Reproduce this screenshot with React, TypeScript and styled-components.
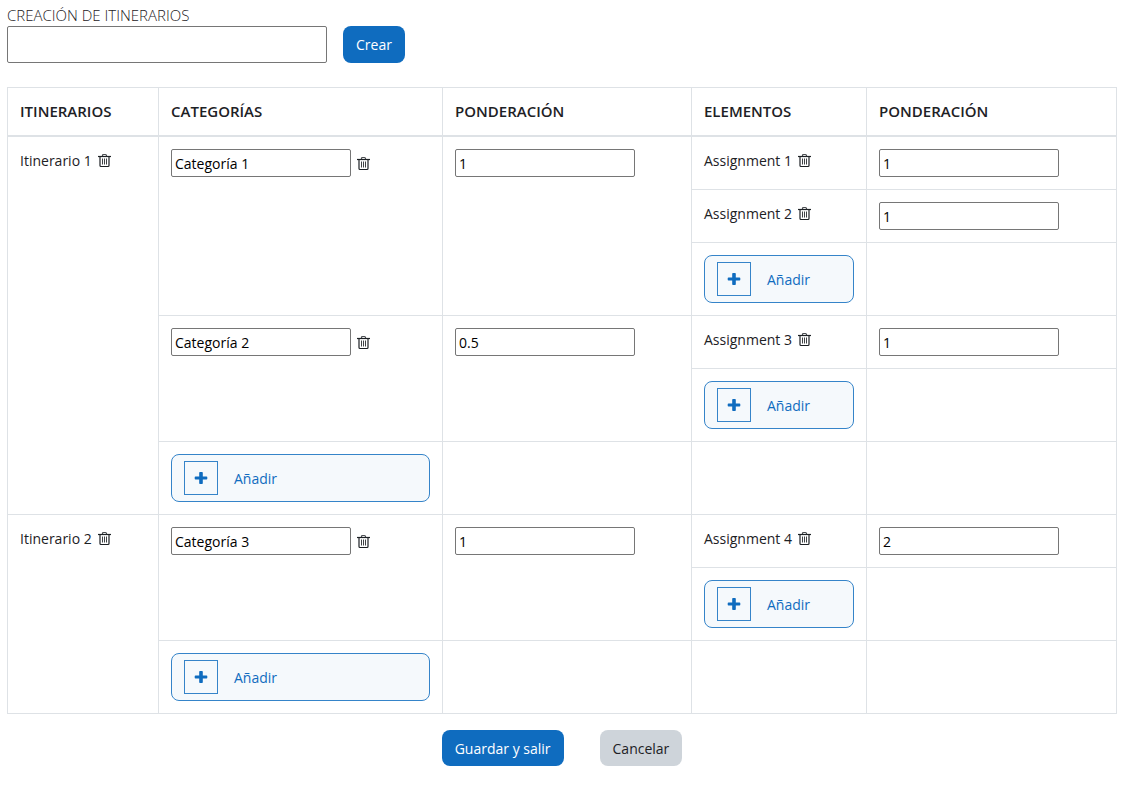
import React from "react";
import styled, { createGlobalStyle } from "styled-components";

const GlobalStyle = createGlobalStyle`
  *, *::before, *::after { box-sizing: border-box; }
  body {
    margin: 0;
    background: #fff;
    color: #1d2125;
    font-family: "Segoe UI", "Open Sans", "Noto Sans", sans-serif;
    font-size: 14px;
    line-height: 23px;
  }
  button, input { font: inherit; }
`;

const Page = styled.main`
  padding: 4px 13px 16px 7px;
`;

const CreateForm = styled.form`
  display: grid;
  grid-template-columns: 320px auto;
  justify-content: start;
  column-gap: 16px;
  margin-bottom: 24px;
`;

const FormLabel = styled.label`
  grid-column: 1 / -1;
  height: 22px;
  font-size: 15px;
  font-weight: 300;
`;

const TextInput = styled.input<{ $large?: boolean }>`
  width: ${(p) => (p.$large ? "100%" : "180px")};
  max-width: 100%;
  height: ${(p) => (p.$large ? "37px" : "28px")};
  padding: 1px 3px;
  border: 1px solid #767676;
  border-radius: 2px;
  background: #fff;
  color: #000;
`;

const Button = styled.button<{ $variant?: "primary" | "secondary" }>`
  min-height: 36px;
  padding: 0 13px;
  border: 0;
  border-radius: 8px;
  cursor: pointer;
  background: ${(p) => (p.$variant === "secondary" ? "#ced4da" : "#0f6cbf")};
  color: ${(p) => (p.$variant === "secondary" ? "#1d2125" : "#fff")};
`;

const Table = styled.table`
  width: 100%;
  table-layout: fixed;
  border-collapse: collapse;
`;

const Column = styled.col<{ $width: number }>`
  width: ${(p) => p.$width}px;
`;

const HeadCell = styled.th`
  padding: 12px;
  border: 1px solid #dee2e6;
  border-bottom-width: 2px;
  text-align: left;
  font-size: 15px;
  font-weight: 600;
`;

const Cell = styled.td`
  padding: 12px;
  border: 1px solid #dee2e6;
  vertical-align: top;
`;

const Named = styled.div`
  display: flex;
  align-items: center;
  gap: 6px;
`;

const IconButton = styled.button`
  display: flex;
  padding: 0;
  border: 0;
  background: none;
  color: #1d2125;
  cursor: pointer;
`;

const AddButton = styled.button`
  display: flex;
  align-items: center;
  gap: 16px;
  width: 100%;
  height: 48px;
  padding: 0 12px;
  border: 1px solid #3584c9;
  border-radius: 8px;
  background: #f5f9fc;
  color: #0f6cbf;
  cursor: pointer;
`;

const PlusBox = styled.span`
  display: flex;
  align-items: center;
  justify-content: center;
  width: 34px;
  height: 34px;
  border: 1px solid #3584c9;
`;

const Actions = styled.div`
  display: flex;
  justify-content: center;
  gap: 36px;
  margin-top: 16px;
`;

const TrashIcon = () => (
  <svg width="13" height="15" viewBox="0 0 13 15" fill="none" stroke="currentColor" aria-hidden="true">
    <path d="M0 3.500h13" strokeWidth="1.200" />
    <path d="M4.500 3.500v-1q0-1 1-1h2q1 0 1 1v1" strokeWidth="1.200" opacity="0.800" />
    <path d="M2 3.500v9q0 1 1 1h7q1 0 1-1v-9" strokeWidth="1.200" />
    <path d="M4.500 5.500v6M6.500 5.500v6M8.500 5.500v6" opacity="0.850" />
  </svg>
);

const PlusIcon = () => (
  <svg width="14" height="14" viewBox="0 0 14 14" fill="currentColor" aria-hidden="true">
    <path d="M6 1h2q.8 0 .8.8v3.700h3.700q.8 0 .8.8v1.400q0 .8-.8.8H8.800v3.700q0 .8-.8.8H6q-.8 0-.8-.8V8.500H1.500q-.8 0-.8-.8V6.300q0-.8.8-.8h3.700V1.800q0-.8.8-.8z" />
  </svg>
);

const Remove = ({ name }: { name: string }) => (
  <IconButton type="button" aria-label={`Eliminar ${name}`}>
    <TrashIcon />
  </IconButton>
);

const Add = () => (
  <AddButton type="button">
    <PlusBox>
      <PlusIcon />
    </PlusBox>
    Añadir
  </AddButton>
);

interface Element {
  name: string;
  weight: string;
}
interface Category extends Element {
  elements: Element[];
}
interface Itinerary {
  name: string;
  categories: Category[];
}

const itineraries: Itinerary[] = [
  {
    name: "Itinerario 1",
    categories: [
      {
        name: "Categoría 1",
        weight: "1",
        elements: [
          { name: "Assignment 1", weight: "1" },
          { name: "Assignment 2", weight: "1" },
        ],
      },
      { name: "Categoría 2", weight: "0.5", elements: [{ name: "Assignment 3", weight: "1" }] },
    ],
  },
  {
    name: "Itinerario 2",
    categories: [{ name: "Categoría 3", weight: "1", elements: [{ name: "Assignment 4", weight: "2" }] }],
  },
];

const columns = [
  { title: "ITINERARIOS", width: 151 },
  { title: "CATEGORÍAS", width: 284 },
  { title: "PONDERACIÓN", width: 249 },
  { title: "ELEMENTOS", width: 175 },
  { title: "PONDERACIÓN", width: 250 },
];

const ItineraryRows = ({ itinerary }: { itinerary: Itinerary }) => {
  const span = itinerary.categories.reduce((n, c) => n + c.elements.length + 1, 1);
  return (
    <tbody>
      {itinerary.categories.map((category, ci) => {
        const rows = category.elements.length + 1;
        return (
          <React.Fragment key={category.name}>
            {category.elements.map((element, ei) => (
              <tr key={element.name}>
                {ci === 0 && ei === 0 && (
                  <Cell rowSpan={span}>
                    <Named>
                      {itinerary.name}
                      <Remove name={itinerary.name} />
                    </Named>
                  </Cell>
                )}
                {ei === 0 && (
                  <>
                    <Cell rowSpan={rows}>
                      <Named>
                        <TextInput aria-label="Categoría" defaultValue={category.name} />
                        <Remove name={category.name} />
                      </Named>
                    </Cell>
                    <Cell rowSpan={rows}>
                      <TextInput aria-label={`Ponderación de ${category.name}`} defaultValue={category.weight} />
                    </Cell>
                  </>
                )}
                <Cell>
                  <Named>
                    {element.name}
                    <Remove name={element.name} />
                  </Named>
                </Cell>
                <Cell>
                  <TextInput aria-label={`Ponderación de ${element.name}`} defaultValue={element.weight} />
                </Cell>
              </tr>
            ))}
            <tr>
              <Cell>
                <Add />
              </Cell>
              <Cell />
            </tr>
          </React.Fragment>
        );
      })}
      <tr>
        <Cell>
          <Add />
        </Cell>
        <Cell />
        <Cell />
        <Cell />
      </tr>
    </tbody>
  );
};

export default function App() {
  return (
    <>
      <GlobalStyle />
      <Page>
        <CreateForm onSubmit={(e) => e.preventDefault()}>
          <FormLabel htmlFor="nombre">CREACIÓN DE ITINERARIOS</FormLabel>
          <TextInput id="nombre" $large />
          <Button type="submit">Crear</Button>
        </CreateForm>
        <Table>
          <colgroup>
            {columns.map((c, i) => (
              <Column key={i} $width={c.width} />
            ))}
          </colgroup>
          <thead>
            <tr>
              {columns.map((c, i) => (
                <HeadCell key={i} scope="col">
                  {c.title}
                </HeadCell>
              ))}
            </tr>
          </thead>
          {itineraries.map((it) => (
            <ItineraryRows key={it.name} itinerary={it} />
          ))}
        </Table>
        <Actions>
          <Button type="button">Guardar y salir</Button>
          <Button type="button" $variant="secondary">
            Cancelar
          </Button>
        </Actions>
      </Page>
    </>
  );
}
